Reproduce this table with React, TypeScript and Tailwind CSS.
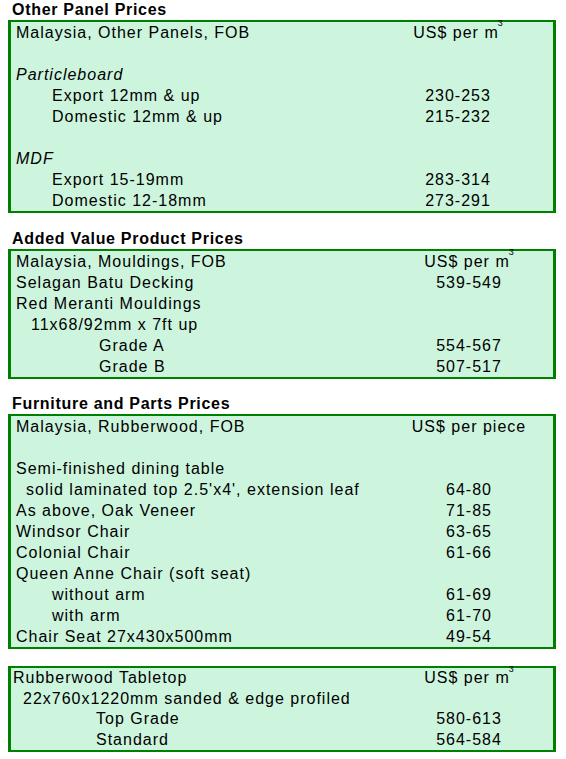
import type { ReactNode } from 'react'

function Row({ pad, price, priceW, italic, short, children }: { pad: string; price?: ReactNode; priceW: string; italic?: boolean; short?: boolean; children?: ReactNode }) {
  return (
    <div className={`flex whitespace-nowrap ${short ? 'h-[20.5px] leading-[20.5px]' : 'h-[21px] leading-[21px]'}`}>
      <div className={`flex-1 ${pad} ${italic ? 'italic' : ''}`}>{children}</div>
      <div className={`${priceW} text-center`}>{price}</div>
    </div>
  )
}

function PerM3() {
  return (
    <span>
      US$ per m<sup className="relative -top-[3px] -ml-[1px] text-[9px] align-top leading-none tracking-normal">3</sup>
    </span>
  )
}

export default function App() {
  return (
    <div className="min-h-screen bg-white px-[8px] text-[16px] tracking-[1px] text-black" style={{ fontFamily: '"Liberation Sans", Arial, sans-serif' }}>
      <h2 className="pl-[4px] text-[16px] font-bold leading-[20px] tracking-[0.7px]">Other Panel Prices</h2>
      <div className="w-[548px] border-x-[3px] border-y-2 border-[#008000] bg-[#cdf5de]">
        <Row pad="pl-[5px]" priceW="w-[190px]" price={<PerM3 />}>Malaysia, Other Panels, FOB</Row>
        <Row pad="pl-[5px]" priceW="w-[190px]" />
        <Row pad="pl-[5px]" priceW="w-[190px]" italic>Particleboard</Row>
        <Row pad="pl-[41px]" priceW="w-[190px]" price="230-253">Export 12mm &amp; up</Row>
        <Row pad="pl-[41px]" priceW="w-[190px]" price="215-232">Domestic 12mm &amp; up</Row>
        <Row pad="pl-[5px]" priceW="w-[190px]" />
        <Row pad="pl-[5px]" priceW="w-[190px]" italic>MDF</Row>
        <Row pad="pl-[41px]" priceW="w-[190px]" price="283-314">Export 15-19mm</Row>
        <Row pad="pl-[41px]" priceW="w-[190px]" price="273-291">Domestic 12-18mm</Row>
      </div>

      <h2 className="mt-[16px] pl-[4px] text-[16px] font-bold leading-[20px] tracking-[0.7px]">Added Value Product Prices</h2>
      <div className="w-[548px] border-x-[3px] border-y-2 border-[#008000] bg-[#cdf5de]">
        <Row pad="pl-[5px]" priceW="w-[168px]" price={<PerM3 />}>Malaysia, Mouldings, FOB</Row>
        <Row pad="pl-[5px]" priceW="w-[168px]" price="539-549">Selagan Batu Decking</Row>
        <Row pad="pl-[5px]" priceW="w-[168px]">Red Meranti Mouldings</Row>
        <Row pad="pl-[20px]" priceW="w-[168px]">11x68/92mm x 7ft up</Row>
        <Row pad="pl-[88px]" priceW="w-[168px]" price="554-567">Grade A</Row>
        <Row pad="pl-[88px]" priceW="w-[168px]" price="507-517">Grade B</Row>
      </div>

      <h2 className="mt-[15px] pl-[4px] text-[16px] font-bold leading-[20px] tracking-[0.7px]">Furniture and Parts Prices</h2>
      <div className="w-[548px] border-x-[3px] border-y-2 border-[#008000] bg-[#cdf5de]">
        <Row pad="pl-[5px]" priceW="w-[168px]" price="US$ per piece">Malaysia, Rubberwood, FOB</Row>
        <Row pad="pl-[5px]" priceW="w-[168px]" />
        <Row pad="pl-[5px]" priceW="w-[168px]">Semi-finished dining table</Row>
        <Row pad="pl-[15px]" priceW="w-[168px]" price="64-80">solid laminated top 2.5'x4', extension leaf</Row>
        <Row pad="pl-[5px]" priceW="w-[168px]" price="71-85">As above, Oak Veneer</Row>
        <Row pad="pl-[5px]" priceW="w-[168px]" price="63-65">Windsor Chair</Row>
        <Row pad="pl-[5px]" priceW="w-[168px]" price="61-66">Colonial Chair</Row>
        <Row pad="pl-[5px]" priceW="w-[168px]">Queen Anne Chair (soft seat)</Row>
        <Row pad="pl-[41px]" priceW="w-[168px]" price="61-69">without arm</Row>
        <Row pad="pl-[41px]" priceW="w-[168px]" price="61-70">with arm</Row>
        <Row pad="pl-[5px]" priceW="w-[168px]" price="49-54">Chair Seat 27x430x500mm</Row>
      </div>

      <div className="mt-[17px] w-[548px] border-x-[3px] border-y-2 border-[#008000] bg-[#cdf5de]">
        <Row short pad="pl-[2px]" priceW="w-[168px]" price={<PerM3 />}>Rubberwood Tabletop</Row>
        <Row short pad="pl-[12px]" priceW="w-[168px]">22x760x1220mm sanded &amp; edge profiled</Row>
        <Row short pad="pl-[85px]" priceW="w-[168px]" price="580-613">Top Grade</Row>
        <Row short pad="pl-[85px]" priceW="w-[168px]" price="564-584">Standard</Row>
      </div>
    </div>
  )
}
